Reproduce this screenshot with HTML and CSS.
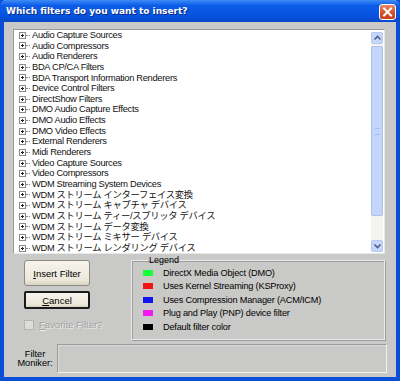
FILE: index.html
```html
<!DOCTYPE html>
<html lang="ja">
<head>
    <meta charset="UTF-8">
    <title>Which filters do you want to insert?</title>
    <link rel="stylesheet" href="styles.css">
</head>
<body>
    <div class="window">
        <div class="titlebar">
            <div class="title">Which filters do you want to insert?</div>
            <div class="close-btn">
                <svg width="15" height="14" viewBox="0 0 15 14">
                    <path d="M4 3.5 L11 10.5 M11 3.5 L4 10.5" stroke="#fff" stroke-width="2" stroke-linecap="square"/>
                </svg>
            </div>
        </div>

        <div class="content">
            <div class="listbox">
                <ul class="tree">
                    <li><span class="plus"></span><span class="dots"></span>Audio Capture Sources</li>
                    <li><span class="plus"></span><span class="dots"></span>Audio Compressors</li>
                    <li><span class="plus"></span><span class="dots"></span>Audio Renderers</li>
                    <li><span class="plus"></span><span class="dots"></span>BDA CP/CA Filters</li>
                    <li><span class="plus"></span><span class="dots"></span>BDA Transport Information Renderers</li>
                    <li><span class="plus"></span><span class="dots"></span>Device Control Filters</li>
                    <li><span class="plus"></span><span class="dots"></span>DirectShow Filters</li>
                    <li><span class="plus"></span><span class="dots"></span>DMO Audio Capture Effects</li>
                    <li><span class="plus"></span><span class="dots"></span>DMO Audio Effects</li>
                    <li><span class="plus"></span><span class="dots"></span>DMO Video Effects</li>
                    <li><span class="plus"></span><span class="dots"></span>External Renderers</li>
                    <li><span class="plus"></span><span class="dots"></span>Midi Renderers</li>
                    <li><span class="plus"></span><span class="dots"></span>Video Capture Sources</li>
                    <li><span class="plus"></span><span class="dots"></span>Video Compressors</li>
                    <li><span class="plus"></span><span class="dots"></span>WDM Streaming System Devices</li>
                    <li><span class="plus"></span><span class="dots"></span>WDM ストリーム インターフェイス変換</li>
                    <li><span class="plus"></span><span class="dots"></span>WDM ストリーム キャプチャ デバイス</li>
                    <li><span class="plus"></span><span class="dots"></span>WDM ストリーム ティー/スプリッタ デバイス</li>
                    <li><span class="plus"></span><span class="dots"></span>WDM ストリーム データ変換</li>
                    <li><span class="plus"></span><span class="dots"></span>WDM ストリーム ミキサー デバイス</li>
                    <li><span class="plus"></span><span class="dots"></span>WDM ストリーム レンダリング デバイス</li>
                </ul>
                <div class="scrollbar">
                    <div class="sb-btn">
                        <svg width="9" height="6" viewBox="0 0 9 6"><path d="M1.5 4.5 L4.5 1.5 L7.5 4.5" fill="none" stroke="#4d6185" stroke-width="1.6"/></svg>
                    </div>
                    <div class="sb-thumb"><span class="grip"></span></div>
                    <div class="sb-track"></div>
                    <div class="sb-btn">
                        <svg width="9" height="6" viewBox="0 0 9 6"><path d="M1.5 1.5 L4.5 4.5 L7.5 1.5" fill="none" stroke="#4d6185" stroke-width="1.6"/></svg>
                    </div>
                </div>
            </div>

            <div class="lower">
                <div class="actions">
                    <div class="btn"><u>I</u>nsert Filter</div>
                    <div class="btn default"><u>C</u>ancel</div>
                    <div class="check disabled">
                        <span class="box"></span>
                        <span><u>F</u>avorite Filter?</span>
                    </div>
                </div>
                <fieldset class="legend">
                    <legend>Legend</legend>
                    <div class="legend-row"><span class="swatch green"></span>DirectX Media Object (DMO)</div>
                    <div class="legend-row"><span class="swatch red"></span>Uses Kernel Streaming (KSProxy)</div>
                    <div class="legend-row"><span class="swatch blue"></span>Uses Compression Manager (ACM/ICM)</div>
                    <div class="legend-row"><span class="swatch magenta"></span>Plug and Play (PNP) device filter</div>
                    <div class="legend-row"><span class="swatch black"></span>Default filter color</div>
                </fieldset>
            </div>

            <div class="moniker">
                <div class="moniker-label">Filter<br>Moniker:</div>
                <div class="moniker-box"></div>
            </div>
        </div>
    </div>
</body>
</html>
```

FILE: styles.css
```css
:root {
    --face: #c9c9c7;
    --xp-blue: #0a4fd8;
    --ui-font: "Liberation Sans", "Noto Sans CJK JP", sans-serif;
}

body {
    margin: 0;
    background: var(--face);
    font-family: var(--ui-font);
    font-size: 9px;
    color: #000;
}

.window {
    width: 400px;
    height: 381px;
    box-sizing: border-box;
    border: 4px solid var(--xp-blue);
    border-top: 0;
    background: var(--face);
    display: flex;
    flex-direction: column;
}

.titlebar {
    height: 22px;
    margin: 0 -4px;
    padding: 0 4px 0 6px;
    display: flex;
    align-items: center;
    justify-content: space-between;
    background: linear-gradient(180deg, #3d8cf6 0%, #0d5ce8 25%, #0653e0 70%, #0a48c8 100%);
    border-radius: 6px 6px 0 0;
}

.title {
    color: #fff;
    font-family: "DejaVu Sans", sans-serif;
    font-weight: bold;
    font-size: 9px;
    letter-spacing: 0;
    text-shadow: 1px 1px 0 #0a2a80;
}

.close-btn {
    width: 15px;
    height: 14px;
    border: 1px solid #fff;
    border-radius: 3px;
    background: linear-gradient(180deg, #e8896a 0%, #d5502a 55%, #c63e1a 100%);
    display: flex;
    align-items: center;
    justify-content: center;
    margin-top: 1px;
}

.close-btn svg {
    display: block;
}

.content {
    flex: 1;
    padding: 7px 11px 0 9px;
    display: flex;
    flex-direction: column;
}

.listbox {
    height: 225px;
    box-sizing: border-box;
    border: 1px solid #9a9a9a;
    border-right-color: #e8e8e8;
    border-bottom-color: #e8e8e8;
    background: #fff;
    display: flex;
}

.tree {
    flex: 1;
    list-style: none;
    margin: 0;
    padding: 0;
    overflow: hidden;
}

.tree li {
    height: 10.65px;
    line-height: 10.65px;
    display: flex;
    align-items: center;
    white-space: nowrap;
    font-size: 9.3px;
    letter-spacing: -0.3px;
    color: #111;
}

.plus {
    position: relative;
    width: 5px;
    height: 5px;
    margin-left: 5px;
    border: 1px solid #8a8a8a;
    flex: none;
}

.plus::before,
.plus::after {
    content: "";
    position: absolute;
    background: #222;
}

.plus::before {
    left: 1px;
    top: 2px;
    width: 3px;
    height: 1px;
}

.plus::after {
    left: 2px;
    top: 1px;
    width: 1px;
    height: 3px;
}

.dots {
    width: 4px;
    margin: 0 2px 0 0;
    border-top: 1px dotted #8a8a8a;
    flex: none;
}

.scrollbar {
    width: 12px;
    margin: 2px 1px 1px 0;
    display: flex;
    flex-direction: column;
    background: #f4f4ee;
}

.sb-btn {
    height: 10px;
    border: 1px solid #b8c9f0;
    border-radius: 2px;
    background: #c6d6fa;
    display: flex;
    align-items: center;
    justify-content: center;
}

.sb-btn svg {
    display: block;
}

.sb-thumb {
    height: 170px;
    margin-top: 2px;
    box-sizing: border-box;
    border: 1px solid #aebfee;
    border-radius: 2px;
    background: #c4d5fb;
    display: flex;
    align-items: center;
    justify-content: center;
}

.grip {
    width: 5px;
    height: 5px;
    border-top: 1px solid #a8bcec;
    border-bottom: 1px solid #a8bcec;
}

.sb-track {
    flex: 1;
}

.lower {
    display: flex;
    margin-top: 2px;
    height: 84px;
}

.actions {
    width: 118px;
    padding: 4px 0 0 11px;
    box-sizing: border-box;
    display: flex;
    flex-direction: column;
}

.btn {
    width: 66px;
    height: 26px;
    box-sizing: border-box;
    border: 1px solid #8d8b80;
    border-radius: 3px;
    background: linear-gradient(180deg, #f6f4ec 0%, #ebe8da 80%, #d9d4c2 100%);
    display: flex;
    align-items: center;
    justify-content: center;
    font-size: 9.5px;
}

.btn.default {
    height: 18px;
    margin-top: 5px;
    border: 2px solid #1a1a1a;
    border-radius: 2px;
}

.check {
    display: flex;
    align-items: center;
    gap: 5px;
    margin-top: 10px;
    font-size: 9.5px;
}

.check .box {
    width: 8px;
    height: 8px;
    border: 1px solid #b5b5b0;
    background: #dcdcd8;
}

.check.disabled {
    color: #a2a2a0;
    text-shadow: 1px 1px 0 #ececec;
}

.legend {
    flex: 1;
    margin: 0;
    padding: 1px 0 0 11px;
    border: 1px solid #e9e9e9;
    box-shadow: inset 1px 1px 0 #9c9c9c, 1px 1px 0 #9c9c9c;
    min-width: 0;
}

.legend legend {
    padding: 0 1px;
    margin-left: 5px;
    font-size: 9px;
    line-height: 9px;
}

.legend-row {
    height: 13.5px;
    display: flex;
    align-items: center;
    gap: 10px;
    font-size: 9.2px;
    letter-spacing: -0.2px;
}

.swatch {
    width: 10px;
    height: 6px;
    flex: none;
}

.swatch.green { background: #19ff3a; }
.swatch.red { background: #f51212; }
.swatch.blue { background: #0f14f0; }
.swatch.magenta { background: #f419f4; }
.swatch.black { background: #000; }

.moniker {
    display: flex;
    align-items: center;
    margin-top: 4px;
}

.moniker-label {
    width: 44px;
    text-align: center;
    font-size: 9.2px;
    line-height: 9px;
}

.moniker-box {
    flex: 1;
    height: 29px;
    box-sizing: border-box;
    margin-right: -2px;
    border: 1px solid #9a9a9a;
    border-right-color: #f2f2f2;
    border-bottom-color: #f2f2f2;
    box-shadow: inset 1px 1px 0 #dadada;
    background: var(--face);
}
```
